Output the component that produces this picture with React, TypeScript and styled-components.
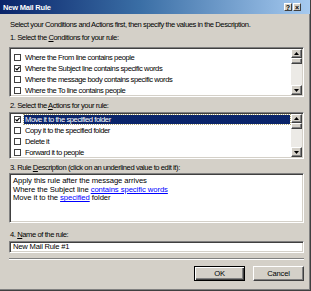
import React from 'react'
import styled, { createGlobalStyle } from 'styled-components'

const GlobalStyle = createGlobalStyle`
  html, body {
    margin: 0;
    padding: 0;
    background: #d4d0c8;
  }
`

const FACE = '#d4d0c8'
const FONT = `"Liberation Sans", Arial, sans-serif`

const Window = styled.div`
  width: 311px;
  height: 291px;
  box-sizing: border-box;
  background: ${FACE};
  border-right: 1px solid #404040;
  border-bottom: 1px solid #404040;
  box-shadow: inset -1px -1px 0 #808080;
  display: flex;
  flex-direction: column;
  font-family: ${FONT};
  font-size: 7.6px;
  letter-spacing: -0.42px;
  color: #000;
`

const TitleBar = styled.div`
  height: 14px;
  flex-shrink: 0;
  display: flex;
  align-items: center;
  padding: 0 9px 0 3px;
  background: linear-gradient(to right, #0a246a 0%, #3a6ea5 45%, #a6caf0 100%);
`

const Title = styled.span`
  color: #fff;
  font-weight: bold;
  font-size: 7.5px;
  letter-spacing: -0.2px;
`

const TitleButtons = styled.div`
  margin-left: auto;
  display: flex;
  gap: 1px;
`

const TitleButton = styled.div`
  width: 8px;
  height: 8px;
  box-sizing: border-box;
  background: ${FACE};
  border: 1px solid;
  border-color: #fff #404040 #404040 #fff;
  display: flex;
  align-items: center;
  justify-content: center;
  font-size: 7px;
  font-weight: bold;
  line-height: 1;
  letter-spacing: 0;
`

const Body = styled.div`
  flex: 1;
  display: flex;
  flex-direction: column;
  padding: 0 6px 0 9px;
`

const Label = styled.div<{ $top: number }>`
  height: 10px;
  line-height: 10px;
  margin-top: ${({ $top }) => $top}px;
  white-space: nowrap;
  padding-left: 1px;
`

const Sunken = styled.div<{ $top: number; $height: number }>`
  margin-top: ${({ $top }) => $top}px;
  height: ${({ $height }) => $height}px;
  box-sizing: border-box;
  background: #fff;
  border: 1px solid;
  border-color: #808080 #fff #fff #808080;
  box-shadow: inset 1px 1px 0 #404040, inset -1px -1px 0 ${FACE};
`

const ListBox = styled(Sunken)`
  display: flex;
  padding: 1px;
  overflow: hidden;
`

const Rows = styled.div<{ $pad: number }>`
  flex: 1;
  padding-top: ${({ $pad }) => $pad}px;
  overflow: hidden;
`

const Row = styled.div`
  height: 11px;
  display: flex;
  align-items: center;
  padding-left: 3px;
  white-space: nowrap;
`

const Box = styled.div`
  width: 7px;
  height: 7px;
  box-sizing: border-box;
  border: 1px solid #404040;
  background: #fff;
  margin-right: 2px;
  display: flex;
  align-items: center;
  justify-content: center;
  flex-shrink: 0;
`

const RowText = styled.div<{ $selected?: boolean }>`
  flex: 1;
  height: 11px;
  line-height: 9px;
  box-sizing: border-box;
  padding-left: 1px;
  border: 1px dotted ${({ $selected }) => ($selected ? '#b0a878' : 'transparent')};
  background: ${({ $selected }) => ($selected ? '#0a246a' : 'transparent')};
  background-clip: padding-box;
  color: ${({ $selected }) => ($selected ? '#fff' : '#000')};
`

const ScrollBar = styled.div`
  width: 11px;
  flex-shrink: 0;
  display: flex;
  flex-direction: column;
  background: #eceae6;
`

const Bevel = styled.div<{ $h: number }>`
  height: ${({ $h }) => $h}px;
  flex-shrink: 0;
  box-sizing: border-box;
  background: ${FACE};
  border: 1px solid;
  border-color: #fff #404040 #404040 #fff;
  box-shadow: inset -1px -1px 0 #808080;
  display: flex;
  align-items: center;
  justify-content: center;
`

const Track = styled.div`
  flex: 1;
`

const Description = styled(Sunken)`
  padding: 3px 3px;
  font-size: 7.7px;
  letter-spacing: -0.08px;
  line-height: 8.7px;
`

const Link = styled.a`
  color: #0000ff;
  text-decoration: underline;
  cursor: pointer;
`

const NameInput = styled(Sunken)`
  padding: 0 3px;
  line-height: 10px;
  letter-spacing: -0.2px;
`

const Separator = styled.div`
  margin-top: 5px;
  height: 0;
  border-top: 1px solid #808080;
  border-bottom: 1px solid #fff;
`

const ButtonRow = styled.div`
  margin-top: 6px;
  display: flex;
  justify-content: flex-end;
  gap: 8px;
`

const Button = styled.div<{ $default?: boolean }>`
  width: 51px;
  height: 15px;
  box-sizing: border-box;
  background: ${FACE};
  border: 1px solid;
  border-color: ${({ $default }) => ($default ? '#000' : '#fff #404040 #404040 #fff')};
  box-shadow: ${({ $default }) =>
    $default
      ? 'inset 1px 1px 0 #fff, inset -1px -1px 0 #404040, inset -2px -2px 0 #808080'
      : 'inset -1px -1px 0 #808080'};
  display: flex;
  align-items: center;
  justify-content: center;
  letter-spacing: -0.2px;
`

const Check = () => (
  <svg width="5" height="5" viewBox="0 0 5 5">
    <path d="M0.5 2.3 L2 3.8 L4.6 0.8" stroke="#000" strokeWidth="1.2" fill="none" />
  </svg>
)

const Arrow = ({ down }: { down?: boolean }) => (
  <svg width="5" height="3" viewBox="0 0 5 3">
    <path d={down ? 'M0 0 H5 L2.5 3 Z' : 'M0 3 H5 L2.5 0 Z'} fill="#000" />
  </svg>
)

type Item = { text: string; checked?: boolean; selected?: boolean }

const conditions: Item[] = [
  { text: 'Where the From line contains people' },
  { text: 'Where the Subject line contains specific words', checked: true },
  { text: 'Where the message body contains specific words' },
  { text: 'Where the To line contains people' },
]

const actions: Item[] = [
  { text: 'Move it to the specified folder', checked: true, selected: true },
  { text: 'Copy it to the specified folder' },
  { text: 'Delete it' },
  { text: 'Forward it to people' },
]

const CheckList = ({ items, top, height, pad }: { items: Item[]; top: number; height: number; pad: number }) => (
  <ListBox $top={top} $height={height}>
    <Rows $pad={pad}>
      {items.map((item, i) => (
        <Row key={i}>
          <Box>{item.checked && <Check />}</Box>
          <RowText $selected={item.selected}>{item.text}</RowText>
        </Row>
      ))}
    </Rows>
    <ScrollBar>
      <Bevel $h={9}><Arrow /></Bevel>
      <Bevel $h={6} />
      <Track />
      <Bevel $h={10}><Arrow down /></Bevel>
    </ScrollBar>
  </ListBox>
)

export default function App() {
  return (
    <>
      <GlobalStyle />
      <Window>
        <TitleBar>
          <Title>New Mail Rule</Title>
          <TitleButtons>
            <TitleButton>?</TitleButton>
            <TitleButton>×</TitleButton>
          </TitleButtons>
        </TitleBar>
        <Body>
          <Label $top={6}>Select your Conditions and Actions first, then specify the values in the Description.</Label>
          <Label $top={3}>1. Select the <u>C</u>onditions for your rule:</Label>
          <CheckList items={conditions} top={4} height={50} pad={3} />
          <Label $top={4}>2. Select the <u>A</u>ctions for your rule:</Label>
          <CheckList items={actions} top={1} height={47} pad={0} />
          <Label $top={4}>3. Rule <u>D</u>escription (click on an underlined value to edit it):</Label>
          <Description $top={0} $height={50}>
            Apply this rule after the message arrives
            <br />
            Where the Subject line <Link>contains specific words</Link>
            <br />
            Move it to the <Link>specified</Link> folder
          </Description>
          <Label $top={7}>4. <u>N</u>ame of the rule:</Label>
          <NameInput $top={1} $height={12}>New Mail Rule #1</NameInput>
          <Separator />
          <ButtonRow>
            <Button $default>OK</Button>
            <Button>Cancel</Button>
          </ButtonRow>
        </Body>
      </Window>
    </>
  )
}
